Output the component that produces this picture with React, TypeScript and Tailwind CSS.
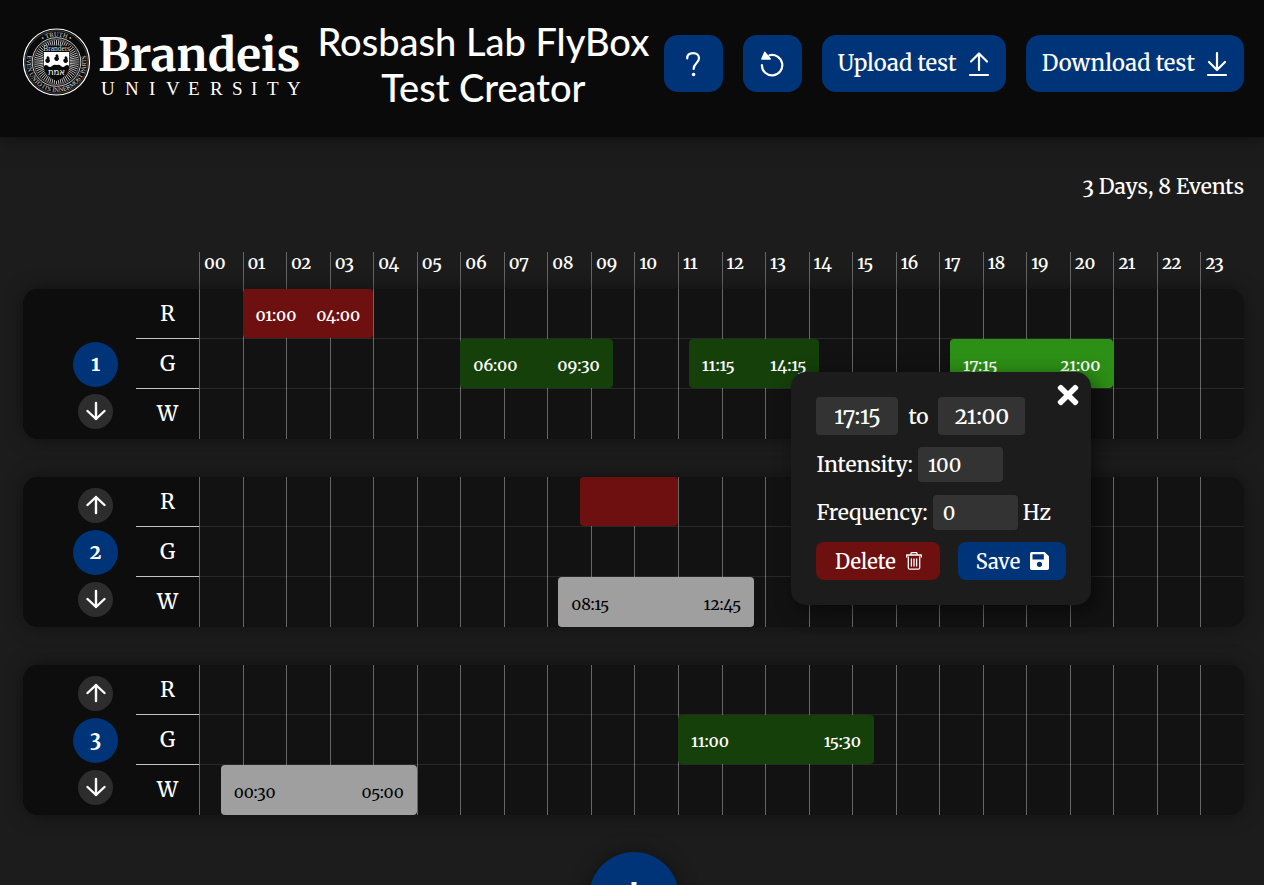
import React from "react";
import { FaTimes } from "react-icons/fa";

type Channel = "R" | "G" | "W";

interface LightEvent {
  channel: Channel;
  start: string;
  end: string;
  hideTimes?: boolean;
  selected?: boolean;
}

const CHANNELS: Channel[] = ["R", "G", "W"];
const HOURS = Array.from({ length: 24 }, (_, i) => String(i).padStart(2, "0"));

const DAYS: LightEvent[][] = [
  [
    { channel: "R", start: "01:00", end: "04:00" },
    { channel: "G", start: "06:00", end: "09:30" },
    { channel: "G", start: "11:15", end: "14:15" },
    { channel: "G", start: "17:15", end: "21:00", selected: true },
  ],
  [
    { channel: "R", start: "08:45", end: "11:00", hideTimes: true },
    { channel: "W", start: "08:15", end: "12:45" },
  ],
  [
    { channel: "G", start: "11:00", end: "15:30" },
    { channel: "W", start: "00:30", end: "05:00" },
  ],
];

const toPercent = (time: string) => {
  const [h, m] = time.split(":").map(Number);
  return ((h + m / 60) / 24) * 100;
};

const RAYS = Array.from({ length: 60 }, (_, i) => (i * Math.PI) / 30);

function Logo() {
  return (
    <svg viewBox="0 0 280 74" className="h-[74px] w-[280px] shrink-0" role="img" aria-label="Brandeis University">
      <defs>
        <path id="seal-top" d="M9.8 25.5A25.5 25.5 0 0 1 57.2 25.5" />
        <path id="seal-bottom" d="M10.2 16.5A29.8 29.8 0 1 0 56.8 16.5" />
      </defs>
      <circle cx="33.5" cy="35" r="33" fill="#0a0a0a" stroke="#fff" strokeWidth="1.2" />
      <circle cx="33.5" cy="35" r="31.3" fill="none" stroke="#777" strokeWidth="0.5" />
      <circle cx="33.5" cy="35" r="24.3" fill="none" stroke="#ddd" strokeWidth="0.9" />
      <circle cx="33.5" cy="35" r="22.6" fill="none" stroke="#999" strokeWidth="0.6" />
      {RAYS.map((a) => (
        <line
          key={a}
          x1={33.5 + 11 * Math.cos(a)}
          y1={35 + 11 * Math.sin(a)}
          x2={33.5 + 22 * Math.cos(a)}
          y2={35 + 22 * Math.sin(a)}
          stroke="#ccc"
          strokeWidth="0.9"
        />
      ))}
      <g fill="#ddd" fontSize="6.4" textAnchor="middle" fontFamily="Liberation Serif, serif">
        <text>
          <textPath href="#seal-top" startOffset="50%">
            • TRUTH •
          </textPath>
        </text>
        <text>
          <textPath href="#seal-bottom" startOffset="50%">
            EVEN UNTO ITS INNERMOST PARTS
          </textPath>
        </text>
      </g>
      <path d="M20.5 18.5H46.5V38C46.5 46.5 40.5 51 33.5 54C26.5 51 20.5 46.5 20.5 38Z" fill="#0a0a0a" />
      <text x="33.5" y="24" textAnchor="middle" fill="#ddd" fontSize="7.5" fontFamily="Liberation Serif, serif">
        Brandeis
      </text>
      <path
        d="M21 25H46V39Q44 37 42 39Q40 41 38 39Q36 37 33.5 38Q31 37 29 39Q27 41 25 39Q23 37 21 39Z"
        fill="#fff"
      />
      {[
        [24.5, 32],
        [33.5, 30],
        [42.5, 32],
      ].map(([x, y]) => (
        <path
          key={x}
          d={`M${x + 0.5} ${y - 3}q-2.5 1.5-1 2.5q-2.5 1-1.5 3q1.5 2.5 3.5 1q2-1.5 .5-3q.8-2-1.5-3.5Z`}
          fill="#0a0a0a"
        />
      ))}
      <text x="33.5" y="48" textAnchor="middle" fill="#fff" fontSize="8.5" fontFamily="DejaVu Sans, sans-serif">
        אמת
      </text>
      <text x="75" y="43.5" fill="#fff" fontSize="46" fontWeight="700" fontFamily="Merriweather, Liberation Serif, serif">
        Brandeis
      </text>
      <text x="78 102 126 143 165 187 209 228 244 264" y="68" fill="#fff" fontSize="19" fontFamily="Liberation Serif, serif">
        UNIVERSITY
      </text>
    </svg>
  );
}

function TransferIcon({ up = false }: { up?: boolean }) {
  return (
    <svg viewBox="0 0 22 28" className="h-7 w-[22px]" fill="none" stroke="currentColor" strokeWidth="2.2" strokeLinecap="round" strokeLinejoin="round" aria-hidden="true">
      <path d={up ? "M11 20V3.5M3 11.5L11 3.5L19 11.5" : "M11 3V20M3 12L11 20L19 12"} />
      <path d="M2 25H20" />
    </svg>
  );
}

function CircleArrow({ up = false }: { up?: boolean }) {
  return (
    <svg viewBox="0 0 20 20" className="size-5" fill="none" stroke="currentColor" strokeWidth="2.4" strokeLinecap="round" strokeLinejoin="round" aria-hidden="true">
      {up ? <path d="M10 18V2M1.5 10L10 2L18.5 10" /> : <path d="M10 2V18M1.5 10L10 18L18.5 10" />}
    </svg>
  );
}

function QuestionIcon() {
  return (
    <svg viewBox="0 0 16 28" className="h-7 w-4" aria-hidden="true">
      <path d="M2.2 8.5C2.2 5.2 4.6 3.2 8.2 3.2C11.800 3.2 14 5.400 14 8.300C14 13 8.600 13 8.600 19" fill="none" stroke="currentColor" strokeWidth="2.2" strokeLinecap="round" />
      <circle cx="8.6" cy="24.500" r="1.8" fill="currentColor" />
    </svg>
  );
}

function ResetIcon() {
  return (
    <svg viewBox="0 0 24 28" className="h-7 w-6" aria-hidden="true">
      <path d="M1.9 15.2A10.2 10.2 0 1 0 9.500 5.300" fill="none" stroke="currentColor" strokeWidth="2.2" strokeLinecap="round" />
      <path d="M4.700 2.2L10.300 9H1.800Z" fill="currentColor" stroke="currentColor" strokeWidth="1.3" strokeLinejoin="round" />
    </svg>
  );
}

function BinIcon() {
  return (
    <svg viewBox="0 0 16 18" className="h-[18px] w-4" fill="none" stroke="currentColor" strokeWidth="1.3" strokeLinecap="round" strokeLinejoin="round" aria-hidden="true">
      <path d="M0.700 5V3H15.300V5M5 3V1.500Q5 0.700 5.700 0.700H10.300Q11 0.700 11 1.500V3" />
      <path d="M2.300 5V15.7Q2.300 17.2 3.800 17.2H12.200Q13.700 17.2 13.700 15.7V5" />
      <path d="M5.400 7V14M8 7V14M10.600 7V14" />
    </svg>
  );
}

function SaveIcon() {
  return (
    <svg viewBox="0 0 19 18" className="h-[18px] w-[19px]" fill="currentColor" fillRule="evenodd" aria-hidden="true">
      <path d="M1.8 0H14.5L19 4.3V16.2Q19 18 17.2 18H1.8Q0 18 0 16.2V1.8Q0 0 1.8 0ZM2.5 2.2V7.6H13.8V2.2ZM9.5 9.7A2.6 2.6 0 1 0 9.5 14.9A2.6 2.6 0 1 0 9.5 9.7Z" />
    </svg>
  );
}

const headerButton =
  "flex h-[57px] shrink-0 items-center justify-center gap-[11px] rounded-[14px] bg-[#003478] text-[22px] whitespace-nowrap text-white";

function Header() {
  return (
    <header className="relative z-10 flex min-h-[137px] items-start bg-[#0a0a0a] px-5 pt-[18px] shadow-[0_0_20px_rgba(0,0,0,0.5)]">
      <div className="ml-[3px] pt-[9px]">
        <Logo />
      </div>
      <h1 className="min-w-0 flex-1 px-1 text-center font-['Lato',sans-serif] text-[38px] leading-[46px] font-medium">
        Rosbash Lab FlyBox Test Creator
      </h1>
      <nav className="flex gap-5 pt-[17px]">
        <button type="button" aria-label="Help" className={`${headerButton} w-[59px]`}>
          <QuestionIcon />
        </button>
        <button type="button" aria-label="Reset" className={`${headerButton} w-[59px]`}>
          <ResetIcon />
        </button>
        <button type="button" className={`${headerButton} px-4`}>
          Upload test
          <TransferIcon up />
        </button>
        <button type="button" className={`${headerButton} px-4`}>
          Download test
          <TransferIcon />
        </button>
      </nav>
    </header>
  );
}

const fieldStyle = "rounded bg-[#333] text-white outline-none";

function EventEditor({ event }: { event: LightEvent }) {
  return (
    <form className="absolute top-[33px] right-[22px] z-20 flex w-[300px] flex-col gap-3 rounded-[15px] bg-[#1c1c1c] p-[25px] text-[21px] leading-[35px] shadow-[5px_5px_20px_rgba(0,0,0,0.5)]">
      <button type="button" aria-label="Close" className="absolute top-2 right-2 flex size-[30px] items-center justify-center">
        <FaTimes className="size-[30px]" />
      </button>
      <div className="flex items-center gap-2.5">
        <input aria-label="Start time" defaultValue={event.start} className={`${fieldStyle} h-[38px] w-[82px] text-center text-[22px]`} />
        <span>to</span>
        <input aria-label="End time" defaultValue={event.end} className={`${fieldStyle} h-[38px] w-[87px] text-center text-[22px]`} />
      </div>
      <div className="flex h-9 items-start gap-[5px]">
        <label htmlFor="intensity">Intensity:</label>
        <input id="intensity" defaultValue="100" className={`${fieldStyle} h-[35px] w-[85px] px-2.5 text-[20px]`} />
      </div>
      <div className="flex items-center gap-[5px]">
        <label htmlFor="frequency">Frequency:</label>
        <input id="frequency" defaultValue="0" className={`${fieldStyle} h-[35px] w-[85px] px-2.5 text-[20px]`} />
        <span>Hz</span>
      </div>
      <div className="flex gap-[18px]">
        <button type="button" className="flex h-[38px] w-[124px] items-center justify-center gap-2.5 rounded-lg bg-[#6f1010] text-[20px]">
          Delete
          <BinIcon />
        </button>
        <button type="button" className="flex h-[38px] w-[108px] items-center justify-center gap-2.5 rounded-lg bg-[#003478] text-[20px]">
          Save
          <SaveIcon />
        </button>
      </div>
    </form>
  );
}

const eventColor = (event: LightEvent) => {
  if (event.channel === "R") return "bg-[#6f1010] font-semibold text-white";
  if (event.channel === "W") return "bg-[#9f9f9f] font-normal text-black";
  return event.selected ? "bg-[#2d9016] font-semibold text-white" : "bg-[#15400a] font-semibold text-white";
};

function EventBar({ event }: { event: LightEvent }) {
  const left = toPercent(event.start);
  return (
    <div className="absolute inset-y-0" style={{ left: `${left}%`, width: `${toPercent(event.end) - left}%` }}>
      <button
        type="button"
        aria-label={`${event.start} to ${event.end}`}
        className={`flex h-full w-full items-center justify-between rounded px-[13px] pt-[3px] text-[16px] ${eventColor(event)}`}
      >
        {!event.hideTimes && (
          <>
            <span>{event.start}</span>
            <span>{event.end}</span>
          </>
        )}
      </button>
      {event.selected && <EventEditor event={event} />}
    </div>
  );
}

const moveButton = "flex size-[35px] items-center justify-center rounded-full bg-[#2d2d2d]";

function DayCard({ index, events }: { index: number; events: LightEvent[] }) {
  return (
    <section className="flex rounded-[15px] bg-[#121212] shadow-[0_0_20px_rgba(0,0,0,0.4)]">
      <div className="flex w-[176px] shrink-0 rounded-l-[15px] bg-[#0d0d0d]">
        <div className="flex w-[113px] flex-col items-center justify-center gap-[7px] pl-8">
          <button type="button" aria-label="Move day up" className={index === 0 ? `${moveButton} invisible` : moveButton}>
            <CircleArrow up />
          </button>
          <div className="flex size-[45px] items-center justify-center rounded-full bg-[#003478] text-[20px] font-bold">{index + 1}</div>
          <button type="button" aria-label="Move day down" className={moveButton}>
            <CircleArrow />
          </button>
        </div>
        <div className="flex-1 divide-y divide-[#c4c4c4] text-center text-[21px] leading-[49px]">
          {CHANNELS.map((channel) => (
            <div key={channel} className="h-[50px]">
              {channel}
            </div>
          ))}
        </div>
      </div>
      <div className="relative min-w-0 flex-1">
        <div className="absolute inset-0 grid grid-cols-24">
          {HOURS.map((hour) => (
            <div key={hour} className="border-l border-[#666]" />
          ))}
        </div>
        <div className="divide-y divide-[#ffffff18]">
          {CHANNELS.map((channel) => (
            <div key={channel} className="relative h-[50px]">
              {events
                .filter((event) => event.channel === channel)
                .map((event) => (
                  <EventBar key={event.start} event={event} />
                ))}
            </div>
          ))}
        </div>
      </div>
    </section>
  );
}

export default function App() {
  return (
    <div className="h-screen overflow-y-auto bg-[#1c1c1c] font-['Merriweather','DejaVu_Serif_Condensed','DejaVu_Serif',serif] font-medium text-white oldstyle-nums [scrollbar-width:none]">
      <Header />
      <main className="pr-5 pb-10 pl-[23px]">
        <p className="pt-[34px] text-right text-[21px] leading-8">3 Days, 8 Events</p>
        <div className="mt-[49px] ml-[176px] grid h-[37px] grid-cols-24 text-[17px] leading-[23px] font-semibold">
          {HOURS.map((hour) => (
            <div key={hour} className="border-l border-[#666] pl-1">
              {hour}
            </div>
          ))}
        </div>
        <div className="flex flex-col gap-[38px]">
          {DAYS.map((events, i) => (
            <DayCard key={i} index={i} events={events} />
          ))}
        </div>
        <div className="mt-[37px] flex justify-center">
          <button type="button" aria-label="Add day" className="flex size-[90px] items-center justify-center rounded-full bg-[#003478] shadow-[0_0_20px_rgba(0,0,0,0.4)]">
            <svg viewBox="0 0 30 30" className="size-[30px]" fill="none" stroke="currentColor" strokeWidth="5" aria-hidden="true">
              <path d="M15 0V30M0 15H30" />
            </svg>
          </button>
        </div>
      </main>
    </div>
  );
}
